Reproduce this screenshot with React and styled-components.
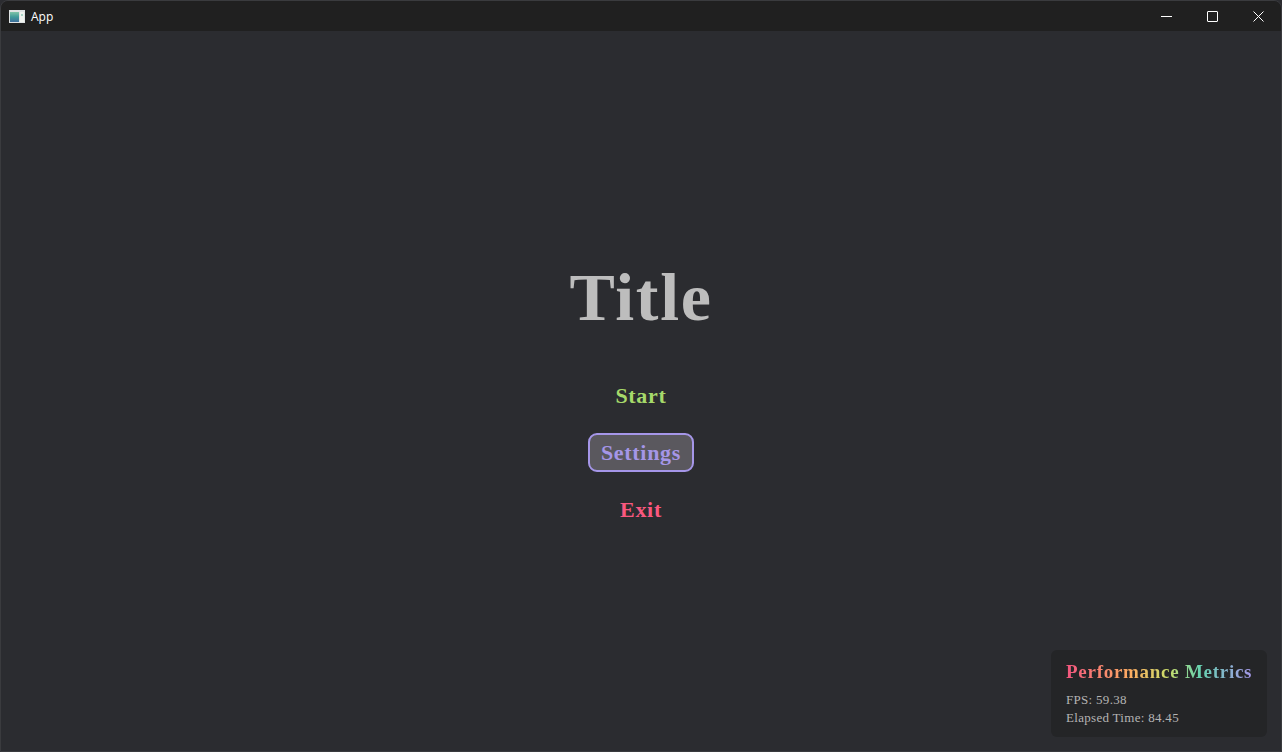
import React from "react";
import styled, { createGlobalStyle } from "styled-components";

const GlobalStyle = createGlobalStyle`
  html, body {
    margin: 0;
    height: 100%;
    background: #2b2c30;
    overflow: hidden;
  }
  #root {
    height: 100%;
  }
`;

const serif = `"Liberation Serif", "Times New Roman", serif`;

function AppIcon() {
  return (
    <svg width="16" height="13" viewBox="0 0 16 13">
      <defs>
        <linearGradient id="iconFill" x1="0" y1="0" x2="0" y2="1">
          <stop offset="0" stopColor="#7fc4a8" />
          <stop offset="0.5" stopColor="#3f9a9a" />
          <stop offset="1" stopColor="#3f6f9c" />
        </linearGradient>
      </defs>
      <rect width="16" height="13" fill="#dfe3e3" />
      <rect x="1" y="2" width="9" height="10" fill="url(#iconFill)" />
      <rect x="11" y="2" width="4" height="10" fill="#f0f3ef" />
      <rect x="12" y="4" width="2" height="2" fill="#a8d4c4" />
    </svg>
  );
}

function App() {
  return (
    <Window>
      <GlobalStyle />
      <TitleBar>
        <AppIcon />
        <AppName>App</AppName>
        <Controls>
          <ControlButton>
            <svg width="11" height="11" viewBox="0 0 11 11">
              <path d="M0 5.5H11" stroke="#fff" strokeWidth="1" />
            </svg>
          </ControlButton>
          <ControlButton>
            <svg width="11" height="11" viewBox="0 0 11 11">
              <rect x="0.5" y="0.5" width="10" height="10" rx="0.5" fill="none" stroke="#fff" strokeWidth="1" />
            </svg>
          </ControlButton>
          <ControlButton>
            <svg width="11" height="11" viewBox="0 0 11 11">
              <path d="M0.5 0.5L10.5 10.5M10.5 0.5L0.5 10.5" stroke="#fff" strokeWidth="1" />
            </svg>
          </ControlButton>
        </Controls>
      </TitleBar>
      <Content>
        <Title>Title</Title>
        <Menu>
          <MenuItem color="#a6d96a">Start</MenuItem>
          <MenuItem color="#a596e8" selected>
            Settings
          </MenuItem>
          <MenuItem color="#f9587f">Exit</MenuItem>
        </Menu>
        <Metrics>
          <MetricsTitle>Performance Metrics</MetricsTitle>
          <MetricsLine>FPS: 59.38</MetricsLine>
          <MetricsLine>Elapsed Time: 84.45</MetricsLine>
        </Metrics>
      </Content>
    </Window>
  );
}
export default App;

const Window = styled.div`
  height: 100%;
  box-sizing: border-box;
  display: flex;
  flex-direction: column;
  border: 1px solid #3a3b3e;
  border-radius: 8px 8px 0 0;
  overflow: hidden;
`;

const TitleBar = styled.div`
  height: 30px;
  flex: none;
  display: flex;
  align-items: center;
  padding-left: 8px;
  background: #202020;
`;

const AppName = styled.div`
  margin-left: 6px;
  font-family: "Open Sans", "Liberation Sans", sans-serif;
  font-size: 12px;
  color: #fff;
`;

const Controls = styled.div`
  margin-left: auto;
  display: flex;
  height: 100%;
`;

const ControlButton = styled.div`
  width: 46px;
  display: flex;
  align-items: center;
  justify-content: center;
`;

const Content = styled.main`
  flex: 1;
  position: relative;
  display: flex;
  flex-direction: column;
  align-items: center;
  padding-top: 226px;
  font-family: ${serif};
  font-weight: bold;
`;

const Title = styled.h1`
  margin: 0;
  font-size: 68px;
  line-height: 80px;
  letter-spacing: 1.7px;
  font-weight: bold;
  color: #bdbdbd;
`;

const Menu = styled.nav`
  margin-top: 39px;
  display: flex;
  flex-direction: column;
  align-items: center;
  gap: 18px;
`;

const MenuItem = styled.div`
  box-sizing: border-box;
  height: 39px;
  padding: 0 10.5px;
  display: flex;
  align-items: center;
  font-size: 22px;
  letter-spacing: 0.7px;
  color: ${(p) => p.color};
  border: 2px solid ${(p) => (p.selected ? p.color : "transparent")};
  border-radius: 9px;
  background: ${(p) => (p.selected ? "#5a585e" : "transparent")};
`;

const Metrics = styled.aside`
  position: absolute;
  right: 14px;
  bottom: 14px;
  width: 216px;
  height: 87px;
  box-sizing: border-box;
  padding: 10px 15px;
  border-radius: 6px;
  background: #242527;
  font-weight: normal;
`;

const MetricsTitle = styled.div`
  width: fit-content;
  white-space: nowrap;
  font-size: 19px;
  line-height: 24px;
  font-weight: bold;
  letter-spacing: 0.72px;
  margin-bottom: 7px;
  background: linear-gradient(to right, #f2557f, #fdae61 35%, #c9dd6a 55%, #66d2b0 72%, #a596e8);
  -webkit-background-clip: text;
  background-clip: text;
  color: transparent;
`;

const MetricsLine = styled.div`
  font-size: 13px;
  line-height: 18px;
  letter-spacing: 0.3px;
  color: #b4b4b4;
`;
